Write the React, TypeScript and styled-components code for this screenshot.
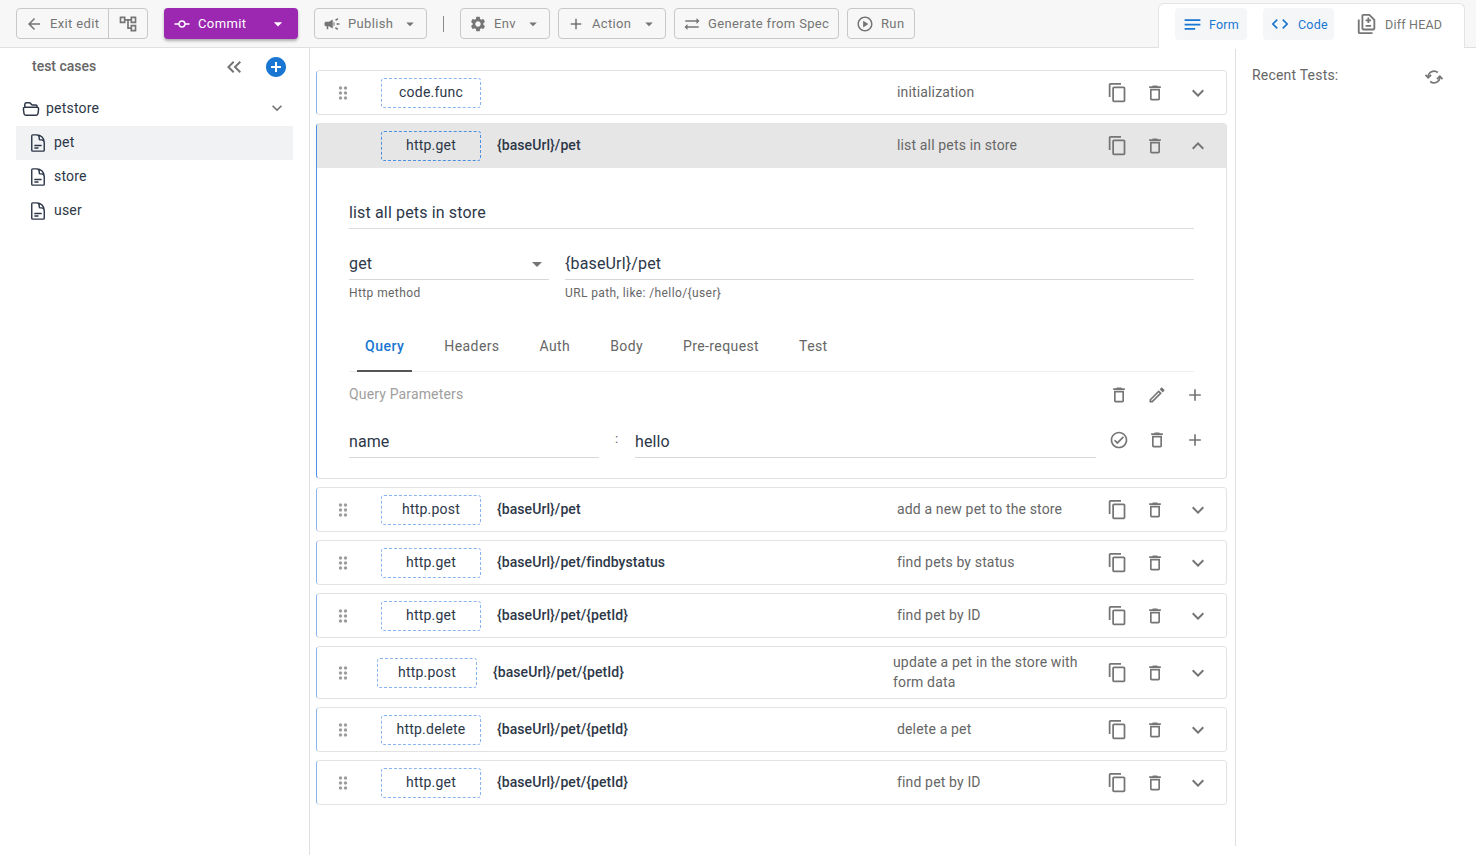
import React from "react";
import styled, { createGlobalStyle } from "styled-components";
import {
  MdAdd,
  MdAddCircle,
  MdArrowBack,
  MdArrowDropDown,
  MdCampaign,
  MdCode,
  MdCommit,
  MdContentCopy,
  MdDragIndicator,
  MdExpandLess,
  MdExpandMore,
  MdKeyboardDoubleArrowLeft,
  MdNotes,
  MdOutlineAccountTree,
  MdOutlineCheckCircle,
  MdOutlineDelete,
  MdOutlineDifference,
  MdOutlineEdit,
  MdOutlinePlayCircle,
  MdSettings,
  MdSyncAlt,
} from "react-icons/md";
import { HiOutlineDocumentText, HiOutlineFolderOpen } from "react-icons/hi2";

const GlobalStyle = createGlobalStyle`
  html, body {
    margin: 0;
    height: 100%;
    overflow: hidden;
    background: #fff;
    font-family: Roboto, "Liberation Sans", sans-serif;
    color: #2d3748;
  }
  * { box-sizing: border-box; }
`;

const Page = styled.div`
  width: 1476px;
  height: 855px;
  display: flex;
  flex-direction: column;
`;

const TopBar = styled.header`
  height: 48px;
  flex-shrink: 0;
  display: flex;
  background: #f7f7f7;
  border-bottom: 1px solid #e0e0e0;
  padding: 8px 11px 0 16px;
`;

const ToolGroup = styled.div`
  display: flex;
  height: 31px;
  border: 1px solid #c8c8c8;
  border-radius: 4px;
  margin-right: 16px;
`;

const ToolButton = styled.div<{ $w: number; $mr?: number }>`
  width: ${(p) => p.$w}px;
  height: 31px;
  margin-right: ${(p) => p.$mr ?? 8}px;
  flex-shrink: 0;
  display: flex;
  align-items: center;
  gap: 7px;
  padding-left: 8px;
  border: 1px solid #c8c8c8;
  border-radius: 4px;
  color: #757575;
  font-size: 13px;
  letter-spacing: 0.35px;
  white-space: nowrap;
  svg { flex-shrink: 0; }
`;

const Label = styled.span<{ $w?: number }>`
  width: ${(p) => (p.$w ? `${p.$w}px` : "auto")};
`;

const GroupPart = styled.div<{ $w: number; $line?: boolean }>`
  width: ${(p) => p.$w}px;
  display: flex;
  align-items: center;
  justify-content: ${(p) => (p.$line ? "flex-start" : "center")};
  gap: 7px;
  padding-left: ${(p) => (p.$line ? "8px" : "0")};
  border-right: ${(p) => (p.$line ? "1px solid #c8c8c8" : "none")};
  color: #757575;
  font-size: 13px;
  letter-spacing: 0.35px;
`;

const CommitButton = styled.div`
  width: 134px;
  height: 31px;
  flex-shrink: 0;
  display: flex;
  align-items: center;
  gap: 7px;
  padding-left: 9px;
  margin-right: 16px;
  border-radius: 4px;
  background: #9c27b0;
  color: #fff;
  font-size: 13px;
  letter-spacing: 0.4px;
  box-shadow: 0 2px 3px rgba(0, 0, 0, 0.3);
`;

const Divider = styled.div`
  width: 1px;
  height: 16px;
  margin: 8px 16px 0 8px;
  background: #8a8a8a;
`;

const ViewTabs = styled.div`
  margin-left: auto;
  margin-top: -5px;
  width: 307px;
  height: 45px;
  display: flex;
  align-items: flex-start;
  padding: 4px 0 0 16px;
  gap: 16px;
  background: #fff;
  border: 1px solid #e4e4e4;
  border-bottom: none;
  border-radius: 6px 6px 0 0;
`;

const ViewTab = styled.div<{ $active?: boolean; $w: number; $pad: number; $gap: number }>`
  width: ${(p) => p.$w}px;
  height: 32px;
  display: flex;
  align-items: center;
  gap: ${(p) => p.$gap}px;
  padding-left: ${(p) => p.$pad}px;
  border-radius: 4px;
  background: ${(p) => (p.$active ? "#f5f6f7" : "transparent")};
  color: ${(p) => (p.$active ? "#1976d2" : "#757575")};
  font-size: 12.5px;
  letter-spacing: 0.2px;
  white-space: nowrap;
  svg { flex-shrink: 0; }
`;

const Body = styled.div`
  flex: 1;
  display: flex;
  min-height: 0;
`;

const Sidebar = styled.aside`
  width: 310px;
  flex-shrink: 0;
  border-right: 1px solid #e0e0e0;
  padding: 0 16px;
`;

const SideHead = styled.div`
  height: 38px;
  display: flex;
  align-items: center;
  padding-left: 16px;
  font-size: 14px;
  font-weight: 500;
  color: #666;
  span { padding-bottom: 2px; }
`;

const HeadIcons = styled.div`
  margin-left: auto;
  display: flex;
  align-items: center;
  gap: 18px;
  margin-right: 5px;
  svg { display: block; }
`;

const TreeFolder = styled.div`
  height: 35px;
  margin-top: 5px;
  display: flex;
  align-items: center;
  gap: 6px;
  padding: 0 6px 0 6px;
  font-size: 14px;
  letter-spacing: 0.2px;
  span { flex: 1; padding-bottom: 1px; }
  svg:last-child { margin-bottom: 1px; }
`;

const TreeFile = styled.div<{ $active?: boolean }>`
  height: 34px;
  display: flex;
  align-items: center;
  gap: 6px;
  padding-left: 12px;
  font-size: 14px;
  letter-spacing: 0.2px;
  background: ${(p) => (p.$active ? "#f1f2f4" : "transparent")};
  span { padding-bottom: 2px; }
  svg { stroke-width: 1.7; margin-bottom: 1px; }
`;

const Main = styled.main`
  width: 925px;
  flex-shrink: 0;
  padding: 22px 8px 0 6px;
  display: flex;
  flex-direction: column;
  gap: 8px;
`;

const Card = styled.section<{ $open?: boolean }>`
  border: 1px solid #e2e2e2;
  border-left: 1px solid ${(p) => (p.$open ? "#4a90e2" : "#8ab4f0")};
  border-radius: 4px;
  overflow: hidden;
`;

const CardRow = styled.div<{ $open?: boolean; $tall?: boolean }>`
  height: ${(p) => (p.$tall ? 51 : p.$open ? 44 : 43)}px;
  display: flex;
  align-items: center;
  background: ${(p) => (p.$open ? "#e6e6e6" : "#fff")};
`;

const Handle = styled.div<{ $tall?: boolean }>`
  width: ${(p) => (p.$tall ? 60 : 64)}px;
  flex-shrink: 0;
  padding-left: 16px;
  color: #9e9e9e;
  svg { display: block; }
`;

const Method = styled.div<{ $open?: boolean }>`
  width: 100px;
  height: 30px;
  flex-shrink: 0;
  display: flex;
  align-items: center;
  justify-content: center;
  border: 1px dashed ${(p) => (p.$open ? "#4a90e2" : "#8ab4f0")};
  border-radius: 3px;
  font-size: 14px;
  letter-spacing: 0.22px;
  padding-bottom: 2px;
`;

const Url = styled.div<{ $open?: boolean }>`
  width: 400px;
  flex-shrink: 0;
  margin-left: 16px;
  font-size: 14px;
  font-weight: 500;
  letter-spacing: 0.08px;
  padding-bottom: ${(p) => (p.$open ? 3 : 1)}px;
`;

const Desc = styled.div<{ $tall?: boolean; $open?: boolean }>`
  width: 191px;
  flex-shrink: 0;
  color: #666;
  font-size: 14px;
  line-height: 20px;
  letter-spacing: 0.15px;
  padding-bottom: ${(p) => (p.$open ? 3 : 1)}px;
  margin-right: ${(p) => (p.$tall ? 4 : 0)}px;
`;

const Actions = styled.div`
  display: flex;
  align-items: center;
  margin-left: 10px;
  color: #757575;
  svg { display: block; flex-shrink: 0; }
`;

const Slot = styled.div<{ $w: number; $lift?: boolean }>`
  width: ${(p) => p.$w}px;
  flex-shrink: 0;
  display: flex;
  justify-content: center;
  color: #757575;
  margin-top: ${(p) => (p.$lift ? -1 : 0)}px;
`;

const Editor = styled.div`
  height: 310px;
  padding: 32px 32px 0;
`;

const Summary = styled.div`
  height: 29px;
  padding-top: 3px;
  font-size: 16px;
  border-bottom: 1px solid #ddd;
  letter-spacing: 0.15px;
`;

const FieldRow = styled.div`
  display: flex;
  gap: 16px;
  margin-top: 22px;
`;

const Field = styled.div<{ $w?: number }>`
  width: ${(p) => (p.$w ? `${p.$w}px` : "auto")};
  flex: ${(p) => (p.$w ? "none" : 1)};
`;

const FieldValue = styled.div`
  height: 29px;
  padding-top: 3px;
  display: flex;
  justify-content: space-between;
  font-size: 16px;
  border-bottom: 1px solid #d8d8d8;
  letter-spacing: 0.15px;
  svg { color: #757575; margin-top: -2px; }
`;

const FieldHint = styled.div`
  margin-top: 5px;
  font-size: 12px;
  line-height: 16px;
  color: #666;
  letter-spacing: 0.4px;
`;

const TabStrip = styled.div`
  height: 49px;
  margin-top: 22px;
  display: flex;
  padding-left: 8px;
  border-bottom: 1px solid #eee;
`;

const Tab = styled.div<{ $active?: boolean }>`
  padding: 0 8px 1px;
  margin-right: 24px;
  height: 49px;
  display: flex;
  align-items: center;
  font-size: 14px;
  letter-spacing: ${(p) => (p.$active ? 0.5 : 0.4)}px;
  color: ${(p) => (p.$active ? "#1976d2" : "#666")};
  font-weight: ${(p) => (p.$active ? 500 : 400)};
  border-bottom: 2px solid ${(p) => (p.$active ? "#555" : "transparent")};
`;

const ParamHead = styled.div`
  height: 45px;
  display: flex;
  align-items: center;
  font-size: 14px;
  letter-spacing: 0.15px;
  color: #9e9e9e;
  padding-bottom: 1px;
`;

const ParamIcons = styled.div<{ $top?: number }>`
  margin-left: auto;
  margin-right: -20px;
  padding-top: ${(p) => p.$top ?? 2}px;
  flex-shrink: 0;
  display: flex;
  svg { display: block; }
`;

const ParamRow = styled.div`
  display: flex;
  align-items: flex-start;
`;

const ParamField = styled.div<{ $w: number }>`
  width: ${(p) => p.$w}px;
  height: 41px;
  flex-shrink: 0;
  padding-top: 15px;
  font-size: 16px;
  letter-spacing: 0.1px;
  border-bottom: 1px solid #d8d8d8;
`;

const Colon = styled.div`
  width: 36px;
  flex-shrink: 0;
  padding: 14px 0 0 16px;
  font-size: 13px;
  color: #666;
`;

const RightPanel = styled.aside`
  flex: 1;
  height: 797px;
  margin-top: 1px;
  border-left: 1px solid #e0e0e0;
  display: flex;
  align-items: flex-start;
  justify-content: space-between;
  padding: 18px 32px 0 16px;
  color: #666;
  font-size: 14px;
  letter-spacing: 0.2px;
`;

type Step = { method: string; url?: string; desc: string; tall?: boolean };

const before: Step = { method: "code.func", desc: "initialization" };

const after: Step[] = [
  { method: "http.post", url: "{baseUrl}/pet", desc: "add a new pet to the store" },
  { method: "http.get", url: "{baseUrl}/pet/findbystatus", desc: "find pets by status" },
  { method: "http.get", url: "{baseUrl}/pet/{petId}", desc: "find pet by ID" },
  {
    method: "http.post",
    url: "{baseUrl}/pet/{petId}",
    desc: "update a pet in the store with form data",
    tall: true,
  },
  { method: "http.delete", url: "{baseUrl}/pet/{petId}", desc: "delete a pet" },
  { method: "http.get", url: "{baseUrl}/pet/{petId}", desc: "find pet by ID" },
];

function RefreshIcon() {
  return (
    <svg width="20" height="20" viewBox="0 0 24 24" fill="none" stroke="#757575" strokeWidth="2">
      <path d="M5 12a7 7 0 0 1 11.5-5.4" />
      <path d="M1.8 9.5 5 13l3.5-3.5" />
      <path d="M19 12a7 7 0 0 1-11.5 5.4" />
      <path d="M15.5 14.5 19 11l3.2 3.5" />
    </svg>
  );
}

function RowActions({ open }: { open?: boolean }) {
  return (
    <Actions>
      <Slot $w={38} $lift><MdContentCopy size={21} /></Slot>
      <Slot $w={38} $lift={open}><MdOutlineDelete size={20} /></Slot>
      <Slot $w={48}>{open ? <MdExpandLess size={24} /> : <MdExpandMore size={24} />}</Slot>
    </Actions>
  );
}

function StepCard({ step }: { step: Step }) {
  return (
    <Card>
      <CardRow $tall={step.tall}>
        <Handle $tall={step.tall}><MdDragIndicator size={20} /></Handle>
        <Method>{step.method}</Method>
        <Url>{step.url}</Url>
        <Desc $tall={step.tall}>{step.desc}</Desc>
        <RowActions />
      </CardRow>
    </Card>
  );
}

export default function App() {
  return (
    <Page>
      <GlobalStyle />
      <TopBar>
        <ToolGroup>
          <GroupPart $w={92} $line><MdArrowBack size={18} />Exit edit</GroupPart>
          <GroupPart $w={38}><MdOutlineAccountTree size={20} /></GroupPart>
        </ToolGroup>
        <CommitButton>
          <MdCommit size={18} />
          <Label $w={63}>Commit</Label>
          <MdArrowDropDown size={20} />
        </CommitButton>
        <ToolButton $w={113}>
          <MdCampaign size={18} />
          <Label $w={46}>Publish</Label>
          <MdArrowDropDown size={18} />
        </ToolButton>
        <Divider />
        <ToolButton $w={90}>
          <MdSettings size={18} />
          <Label $w={23}>Env</Label>
          <MdArrowDropDown size={18} />
        </ToolButton>
        <ToolButton $w={108}>
          <MdAdd size={18} />
          <Label $w={41}>Action</Label>
          <MdArrowDropDown size={18} />
        </ToolButton>
        <ToolButton $w={165}><MdSyncAlt size={18} />Generate from Spec</ToolButton>
        <ToolButton $w={68}><MdOutlinePlayCircle size={18} />Run</ToolButton>
        <ViewTabs>
          <ViewTab $active $w={72} $pad={7} $gap={6}><MdNotes size={21} />Form</ViewTab>
          <ViewTab $active $w={71} $pad={7} $gap={8}><MdCode size={20} />Code</ViewTab>
          <ViewTab $w={100} $pad={6} $gap={7}><MdOutlineDifference size={22} />Diff HEAD</ViewTab>
        </ViewTabs>
      </TopBar>
      <Body>
        <Sidebar>
          <SideHead>
            <span>test cases</span>
            <HeadIcons>
              <MdKeyboardDoubleArrowLeft size={24} color="#757575" />
              <MdAddCircle size={24} color="#1976d2" />
            </HeadIcons>
          </SideHead>
          <TreeFolder>
            <HiOutlineFolderOpen size={18} strokeWidth={2} />
            <span>petstore</span>
            <MdExpandMore size={20} color="#757575" />
          </TreeFolder>
          <TreeFile $active><HiOutlineDocumentText size={20} /><span>pet</span></TreeFile>
          <TreeFile><HiOutlineDocumentText size={20} /><span>store</span></TreeFile>
          <TreeFile><HiOutlineDocumentText size={20} /><span>user</span></TreeFile>
        </Sidebar>
        <Main>
          <StepCard step={before} />
          <Card $open>
            <CardRow $open>
              <Handle />
              <Method $open>http.get</Method>
              <Url $open>{"{baseUrl}/pet"}</Url>
              <Desc $open>list all pets in store</Desc>
              <RowActions open />
            </CardRow>
            <Editor>
              <Summary>list all pets in store</Summary>
              <FieldRow>
                <Field $w={200}>
                  <FieldValue>get<MdArrowDropDown size={24} /></FieldValue>
                  <FieldHint>Http method</FieldHint>
                </Field>
                <Field>
                  <FieldValue>{"{baseUrl}/pet"}</FieldValue>
                  <FieldHint>{"URL path, like: /hello/{user}"}</FieldHint>
                </Field>
              </FieldRow>
              <TabStrip>
                <Tab $active>Query</Tab>
                <Tab>Headers</Tab>
                <Tab>Auth</Tab>
                <Tab>Body</Tab>
                <Tab>Pre-request</Tab>
                <Tab>Test</Tab>
              </TabStrip>
              <ParamHead>
                Query Parameters
                <ParamIcons>
                  <Slot $w={38}><MdOutlineDelete size={20} /></Slot>
                  <Slot $w={38}><MdOutlineEdit size={20} /></Slot>
                  <Slot $w={38}><MdAdd size={20} /></Slot>
                </ParamIcons>
              </ParamHead>
              <ParamRow>
                <ParamField $w={250}>name</ParamField>
                <Colon>:</Colon>
                <ParamField $w={461}>hello</ParamField>
                <ParamIcons $top={13}>
                  <Slot $w={46}><MdOutlineCheckCircle size={20} /></Slot>
                  <Slot $w={30}><MdOutlineDelete size={20} /></Slot>
                  <Slot $w={46}><MdAdd size={20} /></Slot>
                </ParamIcons>
              </ParamRow>
            </Editor>
          </Card>
          {after.map((s, i) => (
            <StepCard key={i} step={s} />
          ))}
        </Main>
        <RightPanel>
          Recent Tests:
          <RefreshIcon />
        </RightPanel>
      </Body>
    </Page>
  );
}
